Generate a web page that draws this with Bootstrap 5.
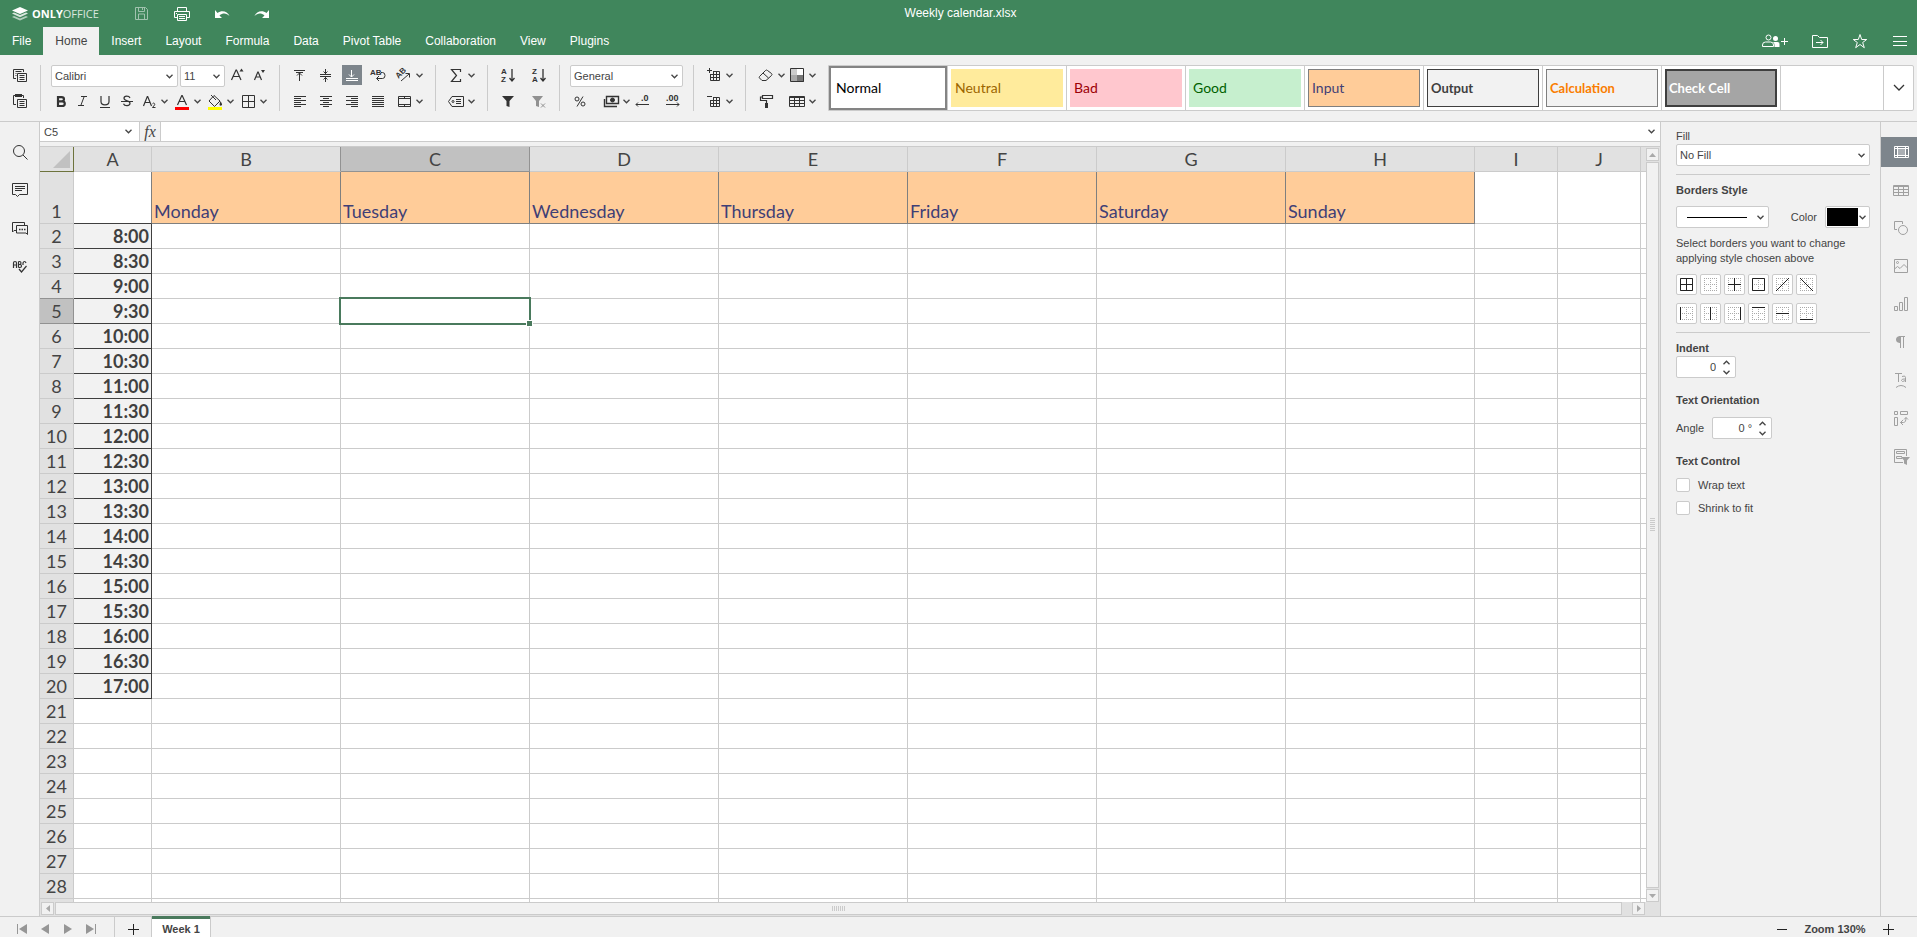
<!DOCTYPE html>
<html lang="en">
<head>
<meta charset="utf-8">
<meta name="viewport" content="width=device-width, initial-scale=1">
<title>Weekly calendar.xlsx</title>
<link href="https://cdn.jsdelivr.net/npm/bootstrap@5.3.0/dist/css/bootstrap.min.css" rel="stylesheet">
<style>
:root{--line:#cbcbcb;--bg:#f1f1f1;--green:#40865c;--ink:#444;--active:#7d858c;
--chev:url("data:image/svg+xml,%3Csvg xmlns='http://www.w3.org/2000/svg' width='7' height='5' fill='none' stroke='%23444' stroke-width='1.3'%3E%3Cpath d='M.5 .8l3 3 3-3'/%3E%3C/svg%3E")}
body{font:11px/15px "Liberation Sans",Arial,sans-serif;color:var(--ink);background:var(--bg);overflow:hidden}
svg{display:block;fill:none;stroke:currentColor;flex:none}
svg text{stroke:none;fill:currentColor;font-family:"Liberation Sans",sans-serif}
button{border:0;background:none;color:inherit;padding:0;font:inherit;display:flex;align-items:center;justify-content:center}
.topbar{background:var(--green);color:#fff}
.titlebar{height:27px;font-size:12px}
.brandbox{width:132px;padding-left:12px;gap:4px}
.brandname{font:bold 11px/16px "Open Sans",sans-serif}
.brandname span{font-weight:500;opacity:.8}
.quick{gap:20px}
.tabrow{height:28px;font-size:12px}
.tabrow a{color:#fff;text-decoration:none;padding:0 12px;line-height:28px}
.tabrow a.active{background:var(--bg);color:var(--ink)}
.tabrow .quick{padding-right:7px}
.toolbar{height:67px;padding:10px 3px 0 10px;border-bottom:1px solid var(--line);color:#333}
.toolbar .trow{display:flex;height:22px;gap:2px}
.toolbar .trow+.trow{height:20px;margin-top:4px}
.toolbar .wide{gap:6px}
.vline{width:1px;height:46px;background:var(--line);margin:0 10px;flex:none}
.tool{width:20px;height:20px;flex:none}
.tool.on{background:var(--active);color:#fff}
.drop{width:31px;justify-content:flex-start}
.drop::after{content:"";width:11px;height:5px;background:var(--chev) center no-repeat}
.gap-next{margin-right:11px}
.combo{appearance:none;height:22px;border:1px solid var(--line);border-radius:2px;background:#fff var(--chev) right 4px center no-repeat;color:var(--ink);padding:0 3px;font-size:11px;line-height:18px;outline:0}
.gallery{height:46px;border:1px solid var(--line);border-radius:0 2px 2px 0;background:#fff;min-width:0;margin-left:10px}
.gcell{width:119px;flex:none;border-right:1px solid var(--line);padding:3px}
.gcell>button{width:100%;height:100%;justify-content:flex-start;padding-left:4px;font:14px/18px Lato,sans-serif;border:0 solid}
.gcell>button.strong{font-size:13px;font-weight:700}
.gcell.sel{padding:0}.gcell.sel>button{border:2px solid #848484;padding-left:5px}
.gmore{width:30px;border-left:1px solid var(--line)}
.rail{width:40px;padding-top:15px;gap:8px;border-right:1px solid var(--line)}
.rail.right{width:37px;border:0;border-left:1px solid var(--line);color:#a0a0a0}
.rail button{height:30px;width:100%}
.rail.right button{padding-left:4px}
.rail button.on{background:var(--active);color:#fff}
.fbar{height:20px;background:#fff;border-bottom:1px solid var(--line)}
.fbar .combo{border:0;border-right:1px solid var(--line);border-radius:0;height:19px;width:100px;padding-left:4px;background-position:right 7px center}
.fxbtn{width:21px;border-right:1px solid var(--line);background:var(--bg);font:italic 16px/16px "Liberation Serif",serif}
.fbar input{border:0;outline:0;min-width:0}
.fopen{width:17px;background:var(--chev) center no-repeat}
.sheetbox{margin-top:4px;border-top:1px solid var(--line);background:#e1e1e1;min-height:0}
.cells{flex:1;min-width:0;overflow:hidden;background:#fff}
.cells table{width:100%;table-layout:fixed;border-collapse:separate;border-spacing:0;font:18px/24px Lato,sans-serif}
.cells td,.cells th{height:25px;padding:0 2px;border:solid var(--line);border-width:0 1px 1px 0;vertical-align:bottom;white-space:nowrap}
.cells tr>:last-child{border-right:0}
.cells th{background:#e1e1e1;font-weight:400;text-align:center;padding:0}
.cells th.sel{background:#c1c1c1;border-color:#929292}
.cells th.presel{border-right-color:#929292}
.cells th.prerow{border-bottom-color:#929292}
.cells th.corner{border-color:#6d733c}
.corner svg{margin:0 3px 3px auto}
.cells tr.first>*{height:52px}
.cells td.day{background:#fc9;color:#3f3f76;border-color:#7f7f7f}
.cells td.blank{border-color:#7f7f7f;border-bottom-color:#3f3f3f}
.cells td.hour{background:#f2f2f2;color:#3f3f3f;font-weight:700;text-align:right;border-color:#3f3f3f}
td.cursor{position:relative}
.cursorbox{position:absolute;inset:-2px;border:2px solid #4a7a5d;z-index:2}
.cursorbox::after{content:"";position:absolute;right:-4px;bottom:-4px;width:7px;height:7px;background:#4a7a5d;border:1px solid #fff}
.vscroll{width:14px;padding:1px 1px 0 0}
.hscroll{height:14px;padding:0 15px 1px 1px}
.sbtn,.sthumb{border:1px solid var(--line);background:var(--bg);color:#a9a9a9}
.sbtn{width:13px;height:13px;flex:none}
.sthumb{flex:1}
.vscroll .sthumb{margin:1px 0}
.hscroll .sthumb{margin:0 10px 0 1px}
.side{padding:7px 10px 0 15px;border-left:1px solid var(--line);box-sizing:content-box;width:194px}
.side hr{margin:8px 0;border:0;border-top:1px solid var(--line);opacity:1}
.side .combo,.spin,.colorbtn,.linebtn{border:1px solid var(--line);border-radius:2px;background-color:#fff}
.head{font-weight:700}
.head.spaced{margin:15px 0 9px}
.linebtn{width:93px;height:22px;padding:0 4px 0 10px;justify-content:space-between}
.colorbtn{width:45px;height:22px;padding:1px 3px 1px 1px;justify-content:space-between}
.swatch{width:31px;height:18px;background:#000}
.arrow{width:7px;height:5px;background:var(--chev) no-repeat}
.arrow.up{transform:rotate(180deg)}
.bset{display:flex;gap:3px}
.bset button{width:21px;height:21px;background:#fff;border:1px solid var(--line);border-radius:2px;color:#222}
.bset .dots{stroke:#aaa;stroke-dasharray:1 1}
.spin{width:60px;height:22px;display:flex;padding-right:5px}
.spin input{width:100%;min-width:0;border:0;outline:0;background:none;text-align:right;padding:0 7px 0 0;color:var(--ink)}
.tick{gap:8px;height:14px}
.tick+.tick{margin-top:9px}
.tick input{appearance:none;width:14px;height:14px;margin:0;border:1px solid var(--line);border-radius:2px;background:#fff}
.status{height:21px;border-top:1px solid var(--line);font-weight:700;align-items:flex-start}
.status button{height:24px}
.navset{padding-left:10px;width:114px}
.status .nav-btn{width:24px;color:#969696}
.status .nav-btn.slim{width:22px}
.status .bar{width:1px;height:21px;background:var(--line)}
.sheettab{width:58px;border-top:3px solid #4a7a5d!important;background:#fff!important;margin-top:-1px;padding-bottom:1px!important}
</style>
</head>
<body class="d-flex flex-column vh-100">
<header class="topbar flex-shrink-0">
  <div class="titlebar d-flex align-items-center position-relative">
    <div class="brandbox d-flex align-items-center">
      <svg width="16" height="14" viewBox="0 0 16 14"><path fill="#fff" stroke="none" d="M8 0l8 3.4-8 3.5-8-3.5z"/><path fill="#fff" stroke="none" opacity=".8" d="M2 5.5l6 2.600 6-2.600 2 1L8 10.200 0 6.500z"/><path fill="#fff" stroke="none" opacity=".6" d="M2 9l6 2.500L14 9l2 1-8 3.500L0 10z"/></svg>
      <div class="brandname">ONLY<span>OFFICE</span></div>
    </div>
    <div class="quick d-flex">
      <button class="tool opacity-50" aria-label="Save"><svg width="20" height="20"><path d="M3.500 3.500h10l2 2v10h-12zM6.500 3.500v4h6v-4M10.500 4v2M6.500 15v-5h6v5"/></svg></button>
      <button class="tool" aria-label="Print"><svg width="20" height="20"><path d="M5.500 7V3.500h9V7M5.500 13.500h-3V7.500h15v6H14M5.500 10.500h9v6h-9zM7 12.500h6M7 14.500h6M4 9.500h1"/></svg></button>
      <button class="tool" aria-label="Undo"><svg width="20" height="20"><path fill="#fff" stroke="none" d="M3 6v8h7L7.500 11.500C11 8.500 14.500 9 17.500 12 15.500 7 9.500 6 5.500 9z"/></svg></button>
      <button class="tool" aria-label="Redo"><svg width="20" height="20"><path fill="#fff" stroke="none" d="M17 6v8h-7l2.500-2.500C9 8.500 5.500 9 2.500 12 4.500 7 10.500 6 14.500 9z"/></svg></button>
    </div>
    <div class="position-absolute start-0 end-0 text-center pe-none ps-1">Weekly calendar.xlsx</div>
  </div>
  <nav class="tabrow d-flex">
    <a href="#">File</a><a href="#" class="active">Home</a><a href="#">Insert</a><a href="#">Layout</a><a href="#">Formula</a><a href="#">Data</a><a href="#">Pivot Table</a><a href="#">Collaboration</a><a href="#">View</a><a href="#">Plugins</a>
    <div class="d-flex align-items-center ms-auto quick">
      <button aria-label="Share"><svg width="28" height="20"><circle cx="6.500" cy="6.500" r="2.500"/><path d="M.5 15.500v-1.500q0-3 3-3h5q3 0 3 3v1.500z"/><g fill="#fff" stroke="none"><circle cx="13.500" cy="7.500" r="2.500"/><path d="M11 11h4.500q2 0 2 2v3h-5v-2q0-2-1.500-3z"/></g><path d="M19 10.500h7M22.500 7v7"/></svg></button>
      <button class="tool" aria-label="Open location"><svg width="20" height="20"><path d="M2.500 4.500h5l2 2h8v10h-15zM6 11.500h7M10.500 9l2.500 2.500-2.500 2.500"/></svg></button>
      <button class="tool" aria-label="Favorite"><svg width="20" height="20"><path d="M10 3.500l1.700 5h5l-4 3 1.600 5.200L10 13.500l-4.300 3.200 1.600-5.200-4-3h5z"/></svg></button>
      <button class="tool" aria-label="View settings"><svg width="20" height="20"><path d="M3 5.500h14M3 10.500h14M3 14.500h14"/></svg></button>
    </div>
  </nav>
</header>

<div class="toolbar d-flex flex-shrink-0">
  <div>
    <div class="trow"><button class="tool" aria-label="Copy"><svg width="20" height="20"><path d="M6 13.500H3.500v-9h10V7M5.500 6.500h6M5.500 8.500h1M5.500 10.500h1M7.500 8.500h9v8h-9zM9.500 10.500h5M9.500 12.500h5M9.500 14.500h5"/></svg></button></div>
    <div class="trow"><button class="tool" aria-label="Paste"><svg width="20" height="20"><path d="M6 13.500H3.500v-9h10V7M7.500 8.500h9v8h-9zM9.500 10.500h5M9.500 12.500h5M9.500 14.500h5"/><path d="M5 4.500h7" stroke-width="3"/></svg></button></div>
  </div>
  <div class="vline"></div>
  <div>
    <div class="trow">
      <select class="combo" style="width:127px" aria-label="Font"><option>Calibri</option></select>
      <select class="combo" style="width:45px" aria-label="Font size"><option>11</option></select>
      <button class="tool" aria-label="Increase font size"><svg width="20" height="20"><path stroke-width="1.200" d="M4.500 15L9 5h.5L14 15M6 11.500h6.500"/><path fill="currentColor" stroke="none" d="M12.500 6.500l2-3 2 3z"/></svg></button>
      <button class="tool" aria-label="Decrease font size"><svg width="20" height="20"><path stroke-width="1.200" d="M5.500 15l3.300-8h.4l3.300 8M6.500 12h5"/><path fill="currentColor" stroke="none" d="M12 5h4l-2 3z"/></svg></button>
    </div>
    <div class="trow">
      <button class="tool" aria-label="Bold"><svg width="20" height="20"><path stroke-width="2.200" d="M7 6.100h3.500c3.300 0 3.300 4.200 0 4.200H7h4c3.700 0 3.700 4.700 0 4.700H7zV15"/></svg></button>
      <button class="tool" aria-label="Italic"><svg width="20" height="20"><path d="M8 5.500h6M5 14.500h6M11.200 5.500l-3.400 9"/></svg></button>
      <button class="tool" aria-label="Underline"><svg width="20" height="20"><path stroke-width="1.200" d="M6 5v5.500c0 4.500 8 4.500 8 0V5"/><path d="M5 16.500h10"/></svg></button>
      <button class="tool" aria-label="Strikethrough"><svg width="20" height="20"><path stroke-width="1.200" d="M13 7c-1-2.500-6-2.500-6 .3 0 3.200 6 2 6 5 0 3-5.500 3-6.500.4"/><path d="M4 10.500h12"/></svg></button>
      <button class="tool drop" aria-label="Subscript"><svg width="20" height="20"><path stroke-width="1.200" d="M4.500 15L8.300 5.500h.4L12.500 15M6 11.500h5"/><path d="M13.500 12.700c1-1.500 3 0 2 1.300l-2 2.500h3"/></svg></button>
      <button class="tool drop" aria-label="Font color"><svg width="20" height="20"><path stroke-width="1.200" d="M5.500 14L9.800 4.500h.4L14.500 14M7 10.500h6"/><path stroke="red" stroke-width="3" d="M3 17.500h14"/></svg></button>
      <button class="tool drop" aria-label="Fill color"><svg width="20" height="20"><path d="M9 4.500l6 5.500-5.500 5.500L4 10l5-5.500M6 4l5 5"/><path fill="currentColor" stroke="none" d="M15.500 10q1.800 3 1.500 4-1.500 1.500-2.500 0 0-1 1-4z"/><path stroke="#ff0" stroke-width="3" d="M3 17.500h14"/></svg></button>
      <button class="tool drop" aria-label="Borders"><svg width="20" height="20"><path d="M4.500 4.500h12v12h-12zM10.500 4.500v12M4.500 10.500h12"/></svg></button>
    </div>
  </div>
  <div class="vline"></div>
  <div>
    <div class="trow wide">
      <button class="tool" aria-label="Align top"><svg width="20" height="20"><path d="M4 5.500h11M6 7.500h7M9.500 8v8M7 10.500l2.500-2.500 2.500 2.500"/></svg></button>
      <button class="tool" aria-label="Align middle"><svg width="20" height="20"><path d="M4 9.500h11M4 11.500h11M9.500 4v5M7.500 6.500l2 2 2-2M9.500 17v-5M7.500 14.500l2-2 2 2"/></svg></button>
      <button class="tool on" aria-label="Align bottom"><svg width="20" height="20"><path d="M4 13.500h12M4 15.500h12M9.500 5v7M7 9.500l2.500 2.500 2.500-2.500"/></svg></button>
      <button class="tool" aria-label="Wrap text"><svg width="20" height="20"><text x="2" y="10" font-size="8" font-weight="700">AB</text><path d="M13 7.500h1.500q2.500 0 2.500 3t-2.500 3H9M11 11l-2.500 2.500L11 16"/></svg></button>
      <button class="tool drop" aria-label="Orientation"><svg width="20" height="20"><text transform="rotate(-45 8 9)" x="2" y="10" font-size="8" font-weight="700">AB</text><path d="M7 16l8-7M11.500 8.500h4v4"/></svg></button>
    </div>
    <div class="trow wide">
      <button class="tool" aria-label="Align left"><svg width="20" height="20"><path d="M4 5.500h12M4 7.500h7M4 9.500h12M4 11.500h7M4 13.500h12M4 15.500h7"/></svg></button>
      <button class="tool" aria-label="Align center"><svg width="20" height="20"><path d="M4 5.500h12M7 7.500h6M4 9.500h12M7 11.500h6M4 13.500h12M7 15.500h6"/></svg></button>
      <button class="tool" aria-label="Align right"><svg width="20" height="20"><path d="M4 5.500h12M9 7.500h7M4 9.500h12M9 11.500h7M4 13.500h12M9 15.500h7"/></svg></button>
      <button class="tool" aria-label="Justify"><svg width="20" height="20"><path d="M4 5.500h12M4 7.500h12M4 9.500h12M4 11.500h12M4 13.500h12M4 15.500h12"/></svg></button>
      <button class="tool drop" aria-label="Merge"><svg width="20" height="20"><path d="M4.500 5.500h12v10h-12zM4.500 7.500h12M4.500 13.500h12M10.500 5.500v2M10.500 13.500v2"/></svg></button>
    </div>
  </div>
  <div class="vline"></div>
  <div>
    <div class="trow"><button class="tool drop" aria-label="Sum"><svg width="20" height="20"><path stroke-width="1.200" d="M14.500 7V4.500h-9l5 6-5 6h9V14"/></svg></button></div>
    <div class="trow"><button class="tool drop" aria-label="Named ranges"><svg width="20" height="20"><path d="M6 5.500h11.500v10H6L2.500 10.500zM10 8.500h5M10 10.500h5M10 12.500h5"/><circle cx="7" cy="10.500" r="1"/></svg></button></div>
  </div>
  <div class="vline"></div>
  <div>
    <div class="trow gap-0">
      <button class="tool gap-next" aria-label="Sort ascending"><svg width="20" height="20"><text x="3" y="9" font-size="8" font-weight="700">A</text><text x="3" y="17" font-size="8" font-weight="700">Z</text><path stroke-width="1.300" d="M14 4v12M11.500 13l2.500 3 2.500-3"/></svg></button>
      <button class="tool" aria-label="Sort descending"><svg width="20" height="20"><text x="3" y="9" font-size="8" font-weight="700">Z</text><text x="3" y="17" font-size="8" font-weight="700">A</text><path stroke-width="1.300" d="M14 4v12M11.500 13l2.500 3 2.500-3"/></svg></button>
    </div>
    <div class="trow gap-0">
      <button class="tool gap-next" aria-label="Filter"><svg width="20" height="20"><path fill="currentColor" stroke="none" d="M4 5h12l-4.500 5v6l-3-1v-5z"/></svg></button>
      <button class="tool opacity-50" aria-label="Clear filter"><svg width="20" height="20"><path fill="currentColor" stroke="none" d="M3 5h11l-4 5v6l-3-1v-5z"/><path d="M12 12.500l4 4M16 12.500l-4 4"/></svg></button>
    </div>
  </div>
  <div class="vline"></div>
  <div>
    <div class="trow"><select class="combo" style="width:113px" aria-label="Number format"><option>General</option></select></div>
    <div class="trow gap-0">
      <button class="tool gap-next" aria-label="Percent"><svg width="20" height="20"><circle cx="7" cy="8" r="2"/><circle cx="13" cy="13" r="2"/><path d="M13 5.500l-6 10"/></svg></button>
      <button class="tool drop" aria-label="Accounting"><svg width="20" height="20"><path d="M5.500 5.500h12v7h-12zM3.500 8v7.500H16" stroke-width="1.400"/><circle cx="11.500" cy="9" r="2" fill="currentColor"/></svg></button>
      <button class="tool gap-next" aria-label="Decrease decimal"><svg width="20" height="20"><text x="9" y="10" font-size="9" font-weight="700">.0</text><path d="M4 13.500h13M6 11.500l-2 2 2 2"/></svg></button>
      <button class="tool" aria-label="Increase decimal"><svg width="20" height="20"><text x="3" y="10" font-size="9" font-weight="700">.00</text><path d="M3 13.500h13M14 11.500l2 2-2 2"/></svg></button>
    </div>
  </div>
  <div class="vline"></div>
  <div>
    <div class="trow"><button class="tool drop" aria-label="Insert cells"><svg width="20" height="20"><path d="M3 5.500h5M5.500 3v5M9 6.500h6.500v9h-9V9M6.500 9.500h9M6.500 12.500h9M9.500 6v10M12.500 6v10"/></svg></button></div>
    <div class="trow"><button class="tool drop" aria-label="Delete cells"><svg width="20" height="20"><path d="M3 5.500h5M9 6.500h6.500v9h-9V9M6.500 9.500h9M6.500 12.500h9M9.500 6v10M12.500 6v10"/></svg></button></div>
  </div>
  <div class="vline"></div>
  <div>
    <div class="trow gap-0">
      <button class="tool drop" aria-label="Clear"><svg width="20" height="20"><path d="M3.500 11.500l6-6q1-1 2 0l4 3q1 1 0 2l-5.500 5h-4l-2.500-2.500q-.7-.7 0-1.500zM7 8l5.500 5"/></svg></button>
      <button class="tool drop" aria-label="Conditional formatting"><svg width="20" height="20"><path fill="#fff" stroke="none" d="M10 4h7v7h-7z"/><path fill="#ccc" stroke="none" d="M4 4h6v7H4z"/><path fill="#aaa" stroke="none" d="M4 10h6v7H4z"/><path fill="#777" stroke="none" d="M10 10h7v7h-7z"/><path d="M3.500 3.500h13v13h-13z"/></svg></button>
    </div>
    <div class="trow gap-0">
      <button class="tool gap-next" aria-label="Copy style"><svg width="20" height="20"><path d="M6.500 4.500h10v3h-10zM6.500 6h-2v3.500h6V12" stroke-width="1.200"/><path d="M10.500 12v5" stroke-width="3"/></svg></button>
      <button class="tool drop" aria-label="Format as table"><svg width="20" height="20"><path d="M2.500 5.500h15v10h-15zM2 6.500h16M2 9.500h16M2 12.500h16M7.500 6v10M12.500 6v10"/></svg></button>
    </div>
  </div>
  <div class="gallery d-flex flex-grow-1">
    <div class="gcell sel"><button style="color:#000">Normal</button></div>
    <div class="gcell"><button style="background:#ffeb9c;color:#9c6500">Neutral</button></div>
    <div class="gcell"><button style="background:#ffc7ce;color:#9c0006">Bad</button></div>
    <div class="gcell"><button style="background:#c6efce;color:#006100">Good</button></div>
    <div class="gcell"><button style="background:#fc9;color:#3f3f76;border:1px solid #7f7f7f;padding-left:3px">Input</button></div>
    <div class="gcell"><button class="strong" style="background:#f2f2f2;color:#3f3f3f;border:1px solid #3f3f3f;padding-left:3px">Output</button></div>
    <div class="gcell"><button class="strong" style="background:#f2f2f2;color:#fa7d00;border:1px solid #7f7f7f;padding-left:3px">Calculation</button></div>
    <div class="gcell"><button class="strong" style="background:#a5a5a5;color:#fff;border:2px solid #3f3f3f;padding-left:2px">Check Cell</button></div>
    <button class="gmore ms-auto" aria-label="More styles"><svg width="12" height="8"><path stroke-width="1.300" d="M1 1l5 5 5-5"/></svg></button>
  </div>
</div>

<main class="d-flex flex-fill overflow-hidden" style="min-height:0">
  <div class="rail d-flex flex-column flex-shrink-0" style="color:#333">
    <button aria-label="Search"><svg width="20" height="20"><circle cx="9" cy="9" r="5.500"/><path d="M13 13l4.500 4.500"/></svg></button>
    <button aria-label="Comments"><svg width="20" height="20"><path d="M2.500 3.500h15v11h-8l-2 2-2-2h-3zM5 6.500h10M5 8.500h10M5 10.500h7"/></svg></button>
    <button aria-label="Chat"><svg width="20" height="20"><path d="M6 12.500H4l-1.500 1.500V4.500h12V7M6.500 7.500h11v9l-1.500-1.500H6.500z"/><path d="M9 11.500h6.500" stroke-width="1.600" stroke-dasharray="1.500 1"/></svg></button>
    <button aria-label="Spell check"><svg width="20" height="20"><path stroke-width="1.200" d="M3.500 12V7q0-1.500 1.500-1.500T6.500 7v5M3.500 9h3M8.500 5.500v6M8.500 5.500h1q1.500 0 1.500 1.500t-1.500 1.500h-1h1.500q1.500 0 1.500 1.500t-1.500 1.500h-1.500M16 7q-.5-1.500-1.500-1.500T13 7v2M9 13l2.500 3 5-6"/></svg></button>
  </div>
  <div class="d-flex flex-column flex-grow-1" style="min-width:0">
    <div class="fbar d-flex flex-shrink-0">
      <select class="combo" aria-label="Cell name"><option>C5</option></select>
      <button class="fxbtn" aria-label="Insert function">fx</button>
      <input class="flex-grow-1" aria-label="Formula" type="text">
      <button class="fopen" aria-label="Expand formula bar"></button>
    </div>
    <div class="sheetbox d-flex flex-column flex-grow-1">
      <div class="d-flex flex-grow-1" style="min-height:0">
        <div class="cells">
          <table>
            <colgroup><col style="width:34px"><col style="width:78px"><col span="7" style="width:189px"><col span="2" style="width:83px"><col></colgroup>
            <tbody id="grid"></tbody>
          </table>
        </div>
        <div class="vscroll d-flex flex-column">
          <button class="sbtn" aria-label="Scroll up"><svg width="7" height="4"><path fill="currentColor" stroke="none" d="M0 4l3.500-4L7 4z"/></svg></button>
          <div class="sthumb d-flex align-items-center justify-content-center"><svg width="5" height="14"><path stroke="#cbcbcb" d="M0 .5h5M0 2.500h5M0 4.500h5M0 6.500h5M0 8.500h5M0 10.500h5M0 12.500h5"/></svg></div>
          <button class="sbtn" aria-label="Scroll down"><svg width="7" height="4"><path fill="currentColor" stroke="none" d="M0 0l3.500 4L7 0z"/></svg></button>
        </div>
      </div>
      <div class="hscroll d-flex flex-shrink-0">
        <button class="sbtn" aria-label="Scroll left"><svg width="4" height="7"><path fill="currentColor" stroke="none" d="M4 0L0 3.500 4 7z"/></svg></button>
        <div class="sthumb d-flex align-items-center justify-content-center"><svg width="14" height="5"><path stroke="#cbcbcb" d="M.5 0v5M2.500 0v5M4.500 0v5M6.500 0v5M8.500 0v5M10.500 0v5M12.500 0v5"/></svg></div>
        <button class="sbtn" aria-label="Scroll right"><svg width="4" height="7"><path fill="currentColor" stroke="none" d="M0 0l4 3.500L0 7z"/></svg></button>
      </div>
    </div>
  </div>
  <aside class="side flex-shrink-0">
    <label for="fill" class="d-block">Fill</label>
    <select id="fill" class="combo w-100 d-block"><option>No Fill</option></select>
    <hr>
    <div class="head">Borders Style</div>
    <div class="d-flex align-items-center mt-2">
      <button class="linebtn" aria-label="Border line style"><svg width="60" height="1"><path stroke="#000" d="M0 .5h60"/></svg><span class="arrow"></span></button>
      <label for="bcolor" class="ms-auto me-2">Color</label>
      <button id="bcolor" class="colorbtn"><span class="swatch"></span><span class="arrow"></span></button>
    </div>
    <div class="my-2">Select borders you want to change applying style chosen above</div>
    <div class="bset" id="bset1"></div>
    <div class="bset mt-2" id="bset2"></div>
    <hr>
    <label for="indent" class="head d-block">Indent</label>
    <div class="spin"><input id="indent" type="text" value="0"><div class="d-flex flex-column justify-content-around"><button class="arrow up" aria-label="More indent"></button><button class="arrow" aria-label="Less indent"></button></div></div>
    <div class="head spaced">Text Orientation</div>
    <div class="d-flex align-items-center gap-2"><label for="angle">Angle</label><div class="spin"><input id="angle" type="text" value="0 °"><div class="d-flex flex-column justify-content-around"><button class="arrow up" aria-label="Increase angle"></button><button class="arrow" aria-label="Decrease angle"></button></div></div></div>
    <div class="head spaced">Text Control</div>
    <label class="tick d-flex align-items-center"><input type="checkbox">Wrap text</label>
    <label class="tick d-flex align-items-center"><input type="checkbox">Shrink to fit</label>
  </aside>
  <div class="rail right d-flex flex-column flex-shrink-0">
    <button class="on" aria-label="Cell settings"><svg width="20" height="20"><path d="M6 6h9v8H6z" fill="#fff" fill-opacity=".35" stroke="none"/><path d="M3.500 4.500h14v11h-14zM3.500 6.500h14M3.500 13.500h14M6.500 4.500v11M14.500 4.500v11"/></svg></button>
    <button aria-label="Table settings"><svg width="20" height="20"><path d="M2.500 5.500h15v10h-15zM2 6.500h16M2 9.500h16M2 12.500h16M7.500 6v10M12.500 6v10"/></svg></button>
    <button aria-label="Shape settings"><svg width="20" height="20"><path d="M6 11.500H3.500v-8h8V6"/><circle cx="12" cy="12" r="4.500"/></svg></button>
    <button aria-label="Image settings"><svg width="20" height="20"><path d="M3.500 3.500h13v13h-13zM3.500 13l3-2.500 2.500 2 4-4 3.500 3.500"/><circle cx="6.500" cy="6.500" r="1"/></svg></button>
    <button aria-label="Chart settings"><svg width="20" height="20"><path d="M3.500 12.500h3v4h-3zM8.500 8.500h3v8h-3zM13.500 3.500h3v13h-3z"/></svg></button>
    <button aria-label="Paragraph settings"><svg width="20" height="20"><path fill="currentColor" stroke="none" d="M10 4v7H8.500Q5 10.500 5 7.500T8.500 4z"/><path d="M8 4.500h6M9.500 4v12M12.500 4v12"/></svg></button>
    <button aria-label="Text art settings"><svg width="20" height="20"><path d="M4 3.500h7M7.500 3.500V12M5 17.500q5-4 10 0"/><path d="M11 6.500q3.500-1.500 3.500 1V12M14.500 9q-4-.5-4 1.500t4 0"/></svg></button>
    <button aria-label="Pivot settings"><svg width="20" height="20"><path d="M3.500 3.500h3v3h-3zM9.500 3.500h7v3h-7zM3.500 9.500h3v8h-3zM9.500 14.500h3q2.500 0 2.500-5M12 12l-2.500 2.500L12 17M13 11.500l2-2 2 2"/></svg></button>
    <button aria-label="Slicer settings"><svg width="20" height="20"><path d="M12 16.500H3.500v-13h12V10M5.500 5.500h8v2h-8zM11 10.500H5.500v2H11"/><path fill="currentColor" stroke="none" d="M10 11h9l-3 3.500V19l-3-1.500v-3z"/></svg></button>
  </div>
</main>

<footer class="status d-flex flex-shrink-0">
  <div class="navset d-flex">
    <button class="nav-btn" aria-label="First sheet"><svg width="10" height="10"><path fill="currentColor" stroke="none" d="M10 0v10L2 5z"/><path d="M.5 0v10"/></svg></button>
    <button class="nav-btn slim" aria-label="Previous sheet"><svg width="8" height="10"><path fill="currentColor" stroke="none" d="M8 0v10L0 5z"/></svg></button>
    <button class="nav-btn" aria-label="Next sheet"><svg width="8" height="10"><path fill="currentColor" stroke="none" d="M0 0v10l8-5z"/></svg></button>
    <button class="nav-btn slim" aria-label="Last sheet"><svg width="10" height="10"><path fill="currentColor" stroke="none" d="M0 0v10l8-5z"/><path d="M9.500 0v10"/></svg></button>
  </div>
  <div class="bar"></div>
  <button style="width:36px" aria-label="Add sheet"><svg width="11" height="11"><path stroke="#222" d="M0 5.500h11M5.500 0v11"/></svg></button>
  <div class="bar"></div>
  <button class="sheettab">Week 1</button>
  <div class="bar"></div>
  <button class="ms-auto" style="width:20px" aria-label="Zoom out"><svg width="10" height="11"><path stroke="#222" d="M0 5.500h10"/></svg></button>
  <button style="width:86px">Zoom 130%</button>
  <button style="width:20px;margin-right:19px" aria-label="Zoom in"><svg width="11" height="11"><path stroke="#222" d="M0 5.500h11M5.500 0v11"/></svg></button>
</footer>

<script>
const days = ["Monday","Tuesday","Wednesday","Thursday","Friday","Saturday","Sunday"];
const letters = ["A","B","C","D","E","F","G","H","I","J"];
let html = '<tr><th class="corner"><svg width="17" height="17"><path fill="#c1c1c1" stroke="none" d="M17 0v17H0z"/></svg></th>' +
  letters.map(l => `<th class="${l === "C" ? "sel" : l === "B" ? "presel" : ""}">${l}</th>`).join("") + "<th></th></tr>";
for (let r = 1; r <= 29; r++) {
  html += `<tr class="${r === 1 ? "first" : ""}"><th class="${r === 5 ? "sel" : r === 4 ? "prerow" : ""}">${r < 29 ? r : ""}</th>`;
  for (let c = 0; c < 11; c++) {
    if (r === 1 && c === 0) html += '<td class="blank"></td>';
    else if (r === 1 && c < 8) html += `<td class="day">${days[c - 1]}</td>`;
    else if (c === 0 && r > 1 && r < 21) {
      const half = r + 14;
      html += `<td class="hour">${Math.floor(half / 2)}:${half % 2 ? "30" : "00"}</td>`;
    }
    else if (r === 5 && c === 2) html += '<td class="cursor"><div class="cursorbox"></div></td>';
    else html += "<td></td>";
  }
  html += "</tr>";
}
document.getElementById("grid").innerHTML = html;

const dotted = "M1 1.500h13M1 7.500h13M1 13.500h13M1.500 1v13M7.500 1v13M13.500 1v13";
const sets = {
  bset1: [["All","M1.500 1.500h12v12h-12zM7.500 1v13M1 7.500h13"],["None",""],["Inner","M7.500 1v13M1 7.500h13"],["Outer","M1.500 1.500h12v12h-12z"],["Diagonal up","M1 14L14 1"],["Diagonal down","M1 1l13 13"]],
  bset2: [["Left","M1.500 1v13"],["Inner vertical","M7.500 1v13"],["Right","M13.500 1v13"],["Top","M1 1.500h13"],["Inner horizontal","M1 7.500h13"],["Bottom","M1 13.500h13"]]
};
for (const id in sets)
  document.getElementById(id).innerHTML = sets[id].map(([n, d]) =>
    `<button aria-label="${n}"><svg width="15" height="15"><path class="dots" d="${dotted}"/><path d="${d}"/></svg></button>`).join("");
</script>
<script src="https://cdn.jsdelivr.net/npm/bootstrap@5.3.0/dist/js/bootstrap.bundle.min.js"></script>
</body>
</html>
